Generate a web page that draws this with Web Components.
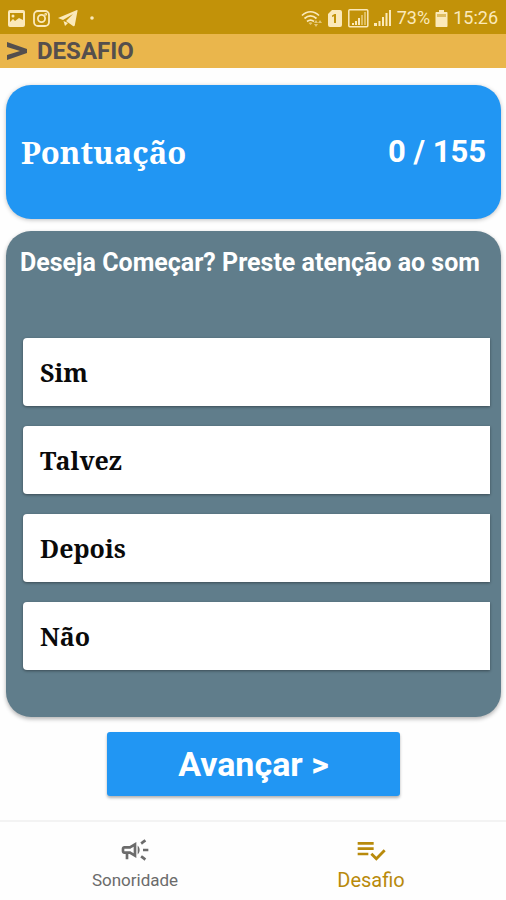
<!DOCTYPE html>
<html lang="pt">
<head>
<meta charset="utf-8">
<meta name="viewport" content="width=device-width, initial-scale=1">
<title>Desafio</title>
<style>
    body {
        margin: 0;
        background: #fefefe;
        font-family: Roboto, "Liberation Sans", sans-serif;
        --amber-dark: #c29209;
        --amber: #eab64c;
        --blue: #2196f3;
        --slate: #607d8b;
        --serif: "Noto Serif", "DejaVu Serif Condensed", "DejaVu Serif", serif;
    }
</style>
</head>
<body>
<quiz-screen>
    <status-bar slot="top" battery="73%" time="15:26"></status-bar>
    <app-header slot="top">DESAFIO</app-header>
    <score-card label="Pontuação">0 / 155</score-card>
    <question-card>
        <span slot="question">Deseja Começar? Preste atenção ao som</span>
        <answer-option>Sim</answer-option>
        <answer-option>Talvez</answer-option>
        <answer-option>Depois</answer-option>
        <answer-option>Não</answer-option>
    </question-card>
    <next-button>Avançar &gt;</next-button>
    <bottom-nav slot="bottom">
        <nav-item href="#sonoridade">
            <svg slot="icon" width="32" height="32" viewBox="0 0 24 24" fill="currentColor" aria-hidden="true">
                <path d="M18 11v2h4v-2h-4zm-2 6.61c.96.71 2.21 1.65 3.2 2.39.4-.53.8-1.07 1.2-1.6-.99-.74-2.24-1.68-3.2-2.4-.4.54-.8 1.08-1.2 1.61zM20.4 5.6c-.4-.53-.8-1.07-1.2-1.6-.99.74-2.24 1.68-3.2 2.4.4.53.8 1.07 1.2 1.6.96-.72 2.21-1.65 3.2-2.4zM4 9c-1.1 0-2 .9-2 2v2c0 1.1.9 2 2 2h1v4h2v-4h1l5 3V6L8 9H4zm5.03 1.71L11 9.53v4.94l-1.97-1.18-.48-.29H4v-2h4.55l.48-.29zM15.5 12c0-1.33-.58-2.53-1.5-3.35v6.69c.92-.81 1.5-2.01 1.5-3.34z"/>
            </svg>
            Sonoridade
        </nav-item>
        <nav-item href="#desafio" active>
            <svg slot="icon" width="32" height="32" viewBox="0 0 24 24" fill="currentColor" aria-hidden="true">
                <path d="M14 10H2v2h12v-2zm0-4H2v2h12V6zM2 16h8v-2H2v2zm19.5-4.5L23 13l-6.99 7-4.51-4.5L13 14l3.01 3 5.49-5.5z"/>
            </svg>
            Desafio
        </nav-item>
    </bottom-nav>
</quiz-screen>

<script>
class BaseElement extends HTMLElement {
    render(html) {
        const templateNode = document.createElement('template');
        templateNode.innerHTML = html;
        const shadowRoot = this.attachShadow({ mode: "open" });
        shadowRoot.appendChild(templateNode.content.cloneNode(true));
    }
}

class QuizScreen extends BaseElement {
    constructor() {
        super();
        this.render(`
            <style>
            :host {
                display: flex;
                flex-direction: column;
                min-height: 100vh;
            }

            main {
                flex-grow: 1;
                display: flex;
                flex-direction: column;
                gap: 12px;
                padding: 17px 5px 20px 6px;
            }
            </style>
            <slot name="top"></slot>
            <main><slot></slot></main>
            <slot name="bottom"></slot>
        `);
    }
}

class StatusBar extends BaseElement {
    constructor() {
        super();
        this.render(`
            <style>
            :host {
                display: flex;
                justify-content: space-between;
                align-items: center;
                height: 34px;
                padding: 2px 8px 0;
                box-sizing: border-box;
                background: var(--amber-dark);
                color: #fbe9ba;
                font-size: 18px;
                line-height: 24px;
            }

            div {
                display: flex;
                align-items: center;
            }

            .notifications {
                gap: 8px;
            }

            .system {
                gap: 5px;
            }
            </style>
            <div class="notifications">
                <svg width="17" height="17" viewBox="0 0 17 17" aria-hidden="true">
                    <path fill="currentColor" fill-rule="evenodd" d="M2 0h13a2 2 0 0 1 2 2v13a2 2 0 0 1-2 2H2a2 2 0 0 1-2-2V2a2 2 0 0 1 2-2zM2 3v9l3-3 2 2 4-3 4 2V3H2z"/>
                    <circle cx="5" cy="6" r="1.5" fill="currentColor"/>
                </svg>
                <svg width="17" height="17" viewBox="0 0 17 17" fill="none" stroke="currentColor" stroke-width="1.8" aria-hidden="true">
                    <rect x="1" y="1" width="15" height="15" rx="4"/>
                    <circle cx="8.5" cy="8.5" r="3.6"/>
                    <circle cx="12.7" cy="4.3" r=".5"/>
                </svg>
                <svg width="20" height="17" viewBox="0 0 20 17" fill="currentColor" aria-hidden="true">
                    <path d="M19 0 0 8l5 2L15 4 8 11l7 5c1 .6 1.5.4 1.800-.7L19.5 1c.1-.8 0-1.100-.5-1zM5.5 11 7 16l3-3z"/>
                </svg>
                <svg width="14" height="17" viewBox="0 0 14 17" fill="currentColor" aria-hidden="true">
                    <circle cx="6" cy="8" r="1.8"/>
                </svg>
            </div>
            <div class="system">
                <svg width="21" height="17" viewBox="0 0 21 17" fill="none" stroke="currentColor" stroke-width="1.7" aria-hidden="true">
                    <path d="M1 5.5C6 .5 13 .5 18 5.5M3.5 8.5c4-3.6 8-3.6 12 0M6 11.5c2.5-2 4.5-2 7 0"/>
                    <path fill="currentColor" stroke="none" d="m9.5 15-2-2c1.3-.9 2.7-.9 4 0zM15 10l2 3h-4zM15 17l-2-3h4zM19 10l2 3h-4z" opacity=".6"/>
                </svg>
                <svg width="16" height="17" viewBox="0 0 16 17" aria-hidden="true">
                    <path fill="currentColor" fill-rule="evenodd" d="M5 0h8a2 2 0 0 1 2 2v13a2 2 0 0 1-2 2H3a2 2 0 0 1-2-2V4zM9 4H7.5L5 5.5V7l2-.7V13h2z"/>
                </svg>
                <svg width="21" height="19" viewBox="0 0 21 19" fill="currentColor" aria-hidden="true">
                    <rect x=".8" y=".8" width="19" height="17" rx="1" fill="none" stroke="currentColor" stroke-width="1.5"/>
                    <path d="M4 14h2v2H4zM7 12h2v4H7zM10 9h2v7h-2z"/>
                    <path opacity=".5" d="M13 6h2v10h-2zM16 3h2v13h-2z"/>
                </svg>
                <svg width="18" height="18" viewBox="0 0 18 18" fill="currentColor" aria-hidden="true">
                    <path d="M0 14h3v3H0zM4.5 12h2v5h-2zM8 8h2v9H8zM11.5 4h2v13h-2zM15 1h2v16h-2z"/>
                </svg>
                <span class="battery"></span>
                <svg width="13" height="17" viewBox="0 0 13 17" aria-hidden="true">
                    <path fill="currentColor" d="M4 0h5v2h2.5c.6 0 1 .4 1 1v13c0 .6-.4 1-1 1h-10c-.6 0-1-.4-1-1V3c0-.6.4-1 1-1H4z"/>
                    <path fill="#c29209" opacity=".5" d="M2 4h9v3H2z"/>
                </svg>
                <span class="time"></span>
            </div>
        `);
    }

    connectedCallback() {
        this.shadowRoot.querySelector('.battery').textContent = this.getAttribute('battery');
        this.shadowRoot.querySelector('.time').textContent = this.getAttribute('time');
    }
}

class AppHeader extends BaseElement {
    constructor() {
        super();
        this.render(`
            <style>
            :host {
                display: flex;
                align-items: center;
                gap: 9px;
                height: 34px;
                padding: 0 6px;
                background: var(--amber);
                color: #554f4d;
            }

            h1 {
                margin: 0;
                font-size: 24px;
                line-height: 32px;
                font-weight: bold;
            }
            </style>
            <svg width="22" height="20" viewBox="0 0 22 20" fill="currentColor" aria-hidden="true">
                <path d="M1 1l20 7v4L1 19v-5l13-4L1 6z"/>
            </svg>
            <h1><slot></slot></h1>
        `);
    }
}

class ScoreCard extends BaseElement {
    constructor() {
        super();
        this.render(`
            <style>
            :host {
                display: flex;
                justify-content: space-between;
                align-items: center;
                padding: 47px 15px;
                border-radius: 25px;
                background: var(--blue);
                box-shadow: 0 1px 4px rgba(0, 0, 0, .25);
                color: #fff;
                font-size: 31px;
                line-height: 40px;
                font-weight: bold;
            }

            .label {
                font-family: var(--serif);
            }
            </style>
            <span class="label"></span>
            <span><slot></slot></span>
        `);
    }

    connectedCallback() {
        this.shadowRoot.querySelector('.label').textContent = this.getAttribute('label');
    }
}

class QuestionCard extends BaseElement {
    constructor() {
        super();
        this.render(`
            <style>
            :host {
                display: block;
                padding: 16px 11px 47px 17px;
                border-radius: 25px;
                background: var(--slate);
                box-shadow: 0 2px 4px rgba(0, 0, 0, .3);
            }

            h2 {
                margin: 0 -6px 59px -3px;
                color: #fff;
                font-size: 25px;
                line-height: 32px;
                font-weight: bold;
            }

            .answers {
                display: flex;
                flex-direction: column;
                gap: 20px;
            }
            </style>
            <h2><slot name="question"></slot></h2>
            <div class="answers"><slot></slot></div>
        `);
    }
}

class AnswerOption extends BaseElement {
    constructor() {
        super();
        this.render(`
            <style>
            :host {
                display: block;
            }

            button {
                display: block;
                width: 100%;
                padding: 18px 17px;
                border: 0;
                border-radius: 4px 0 0 4px;
                background: #fff;
                box-shadow: 0 1px 3px rgba(0, 0, 0, .4);
                color: #0a0a0a;
                font: bold 25px/32px var(--serif);
                text-align: left;
            }
            </style>
            <button type="button"><slot></slot></button>
        `);
    }
}

class NextButton extends BaseElement {
    constructor() {
        super();
        this.render(`
            <style>
            :host {
                display: flex;
                justify-content: center;
                padding-top: 3px;
            }

            button {
                width: 59%;
                padding: 12px;
                border: 0;
                border-radius: 3px;
                background: var(--blue);
                box-shadow: 0 2px 3px rgba(0, 0, 0, .3);
                color: #fff;
                font: bold 34px/40px Roboto, "Liberation Sans", sans-serif;
            }
            </style>
            <button type="button"><slot></slot></button>
        `);
    }
}

class BottomNav extends BaseElement {
    constructor() {
        super();
        this.render(`
            <style>
            :host {
                display: block;
                border-top: 2px solid #f3f3f3;
            }

            nav {
                display: flex;
                padding: 12px 17px 8px;
            }
            </style>
            <nav><slot></slot></nav>
        `);
    }
}

class NavItem extends BaseElement {
    constructor() {
        super();
        this.render(`
            <style>
            :host {
                flex: 1;
                color: #6b6b6b;
                font-size: 17px;
            }

            :host([active]) {
                color: #b88a0b;
                font-size: 20px;
            }

            a {
                display: flex;
                flex-direction: column;
                align-items: center;
                gap: 2px;
                color: inherit;
                line-height: 24px;
                text-decoration: none;
            }
            </style>
            <a><slot name="icon"></slot><span><slot></slot></span></a>
        `);
    }

    connectedCallback() {
        this.shadowRoot.querySelector('a').href = this.getAttribute('href');
    }
}

customElements.define("quiz-screen", QuizScreen);
customElements.define("status-bar", StatusBar);
customElements.define("app-header", AppHeader);
customElements.define("score-card", ScoreCard);
customElements.define("question-card", QuestionCard);
customElements.define("answer-option", AnswerOption);
customElements.define("next-button", NextButton);
customElements.define("bottom-nav", BottomNav);
customElements.define("nav-item", NavItem);
</script>
</body>
</html>
